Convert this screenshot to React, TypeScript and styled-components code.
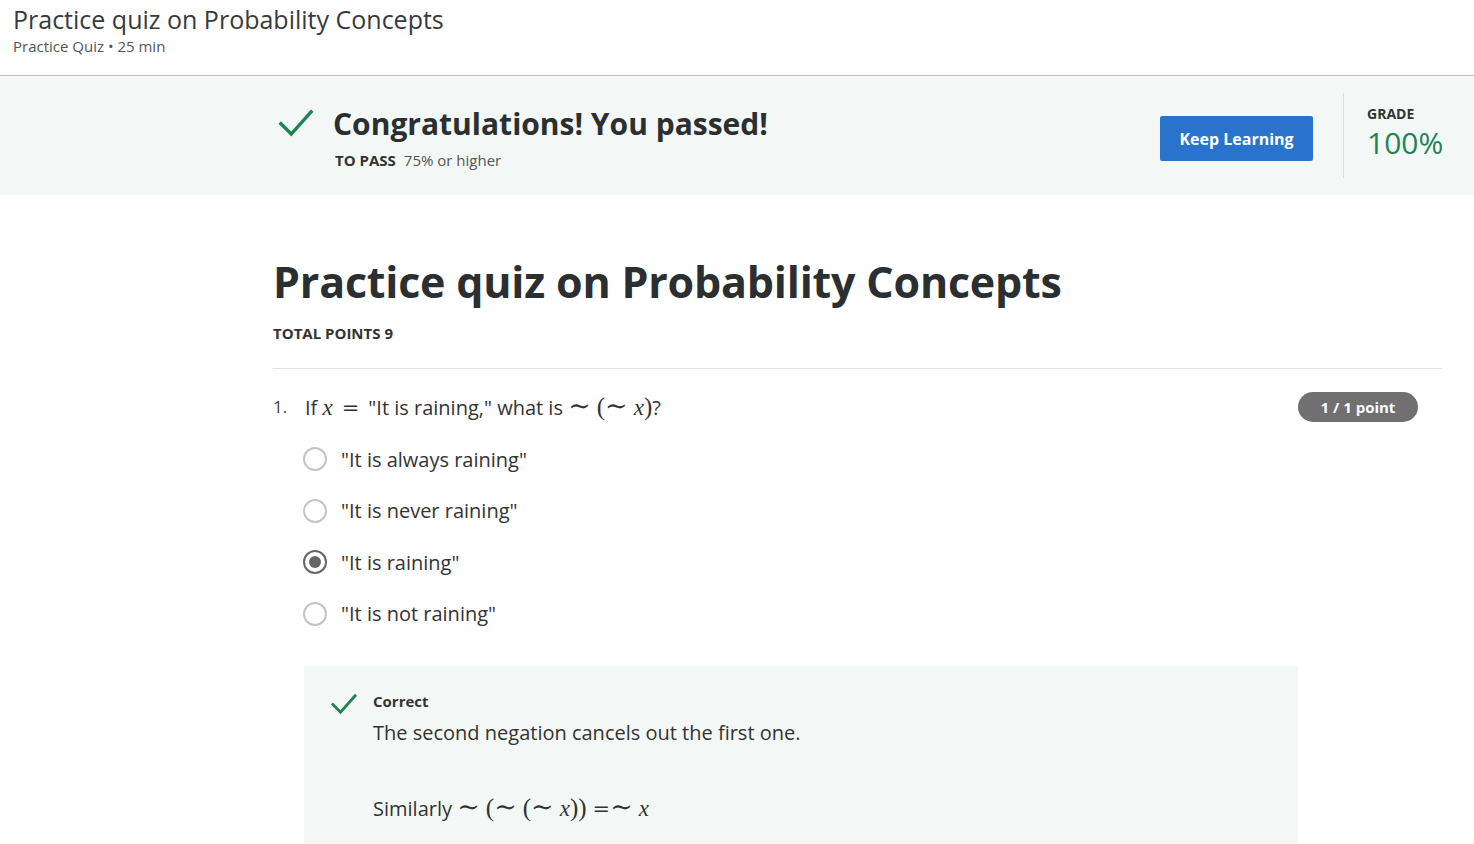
import React from "react";
import styled, { createGlobalStyle } from "styled-components";

const Global = createGlobalStyle`
  html, body { margin: 0; padding: 0; background: #fff; }
  body { font-family: "Open Sans", "Noto Sans", Arial, sans-serif; color: #333; -webkit-font-smoothing: antialiased; }
  * { box-sizing: border-box; }
`;

const Page = styled.div`
  width: 1474px;
  height: 844px;
  overflow: hidden;
`;

const Header = styled.header`
  height: 76px;
  padding: 4px 13px 0;
  border-bottom: 1px solid #bdbdbd;
`;

const HeaderTitle = styled.h1`
  margin: 0;
  font-size: 25px;
  font-weight: 400;
  line-height: 30px;
  color: #373a3c;
`;

const HeaderSub = styled.div`
  margin-top: 2px;
  font-size: 15px;
  line-height: 20px;
  color: #555;
`;

const Band = styled.section`
  height: 119px;
  background: #f3f8f6;
  display: flex;
  align-items: center;
  padding-left: 277px;
`;

const PassBlock = styled.div`
  display: flex;
  align-items: flex-start;
  flex: 1;
`;

const CheckWrap = styled.div<{ $size: number; $top?: number }>`
  width: ${(p) => p.$size}px;
  height: ${(p) => p.$size}px;
  margin-top: ${(p) => p.$top ?? 0}px;
  flex: none;
  display: flex;
`;

const PassText = styled.div`
  margin-left: 18px;
  padding-top: 4px;
`;

const PassTitle = styled.h2`
  margin: 0;
  font-size: 30px;
  font-weight: 700;
  line-height: 38px;
  color: #2b2f31;
`;

const PassMeta = styled.div`
  margin-top: 7px;
  font-size: 15px;
  line-height: 20px;
  color: #555;
  padding-left: 2px;
`;

const Strong = styled.span`
  font-weight: 700;
  color: #333;
  margin-right: 8px;
`;

const KeepButton = styled.button`
  width: 153px;
  height: 45px;
  border: none;
  border-radius: 2px;
  background: #2a73cc;
  color: #fff;
  font-family: inherit;
  font-size: 16px;
  font-weight: 700;
  cursor: pointer;
  margin-right: 30px;
  margin-top: 6px;
`;

const GradeBox = styled.div`
  align-self: stretch;
  margin: 17px 0;
  border-left: 1px solid #dcdcdc;
  padding: 12px 0 0 23px;
  width: 131px;
`;

const GradeLabel = styled.div`
  font-size: 14px;
  font-weight: 700;
  line-height: 18px;
  color: #333;
`;

const GradeValue = styled.div`
  margin-top: 5px;
  font-size: 30px;
  line-height: 30px;
  color: #1f8354;
`;

const Main = styled.main`
  padding: 58px 32px 0 273px;
`;

const QuizTitle = styled.h1`
  margin: 0;
  font-size: 43px;
  font-weight: 700;
  line-height: 58px;
  color: #2b2f31;
  letter-spacing: -0.2px;
`;

const TotalPoints = styled.div`
  margin-top: 12px;
  font-size: 15px;
  font-weight: 700;
  line-height: 20px;
  color: #333;
`;

const Divider = styled.hr`
  margin: 25px 0 0;
  border: none;
  border-top: 1px solid #e3e3e3;
`;

const Question = styled.div`
  padding-top: 23px;
`;

const QuestionRow = styled.div`
  display: flex;
  align-items: flex-start;
`;

const QNum = styled.div`
  width: 32px;
  font-size: 17px;
  line-height: 30px;
  color: #444;
`;

const QText = styled.div`
  flex: 1;
  font-size: 20px;
  line-height: 30px;
  color: #333;
  white-space: nowrap;
`;

const Badge = styled.div`
  margin-right: 24px;
  height: 30px;
  width: 120px;
  border-radius: 15px;
  background: #707070;
  color: #fff;
  font-size: 15px;
  font-weight: 700;
  display: flex;
  align-items: center;
  justify-content: center;
`;

const MathGroup = styled.span`
  font-family: "DejaVu Serif", "Liberation Serif", serif;
  font-size: 22px;
  line-height: 1;
  white-space: nowrap;
`;

const MathOp = styled.span<{ $l?: number; $r?: number }>`
  font-family: "DejaVu Serif", "Liberation Serif", serif;
  font-size: 21px;
  margin-left: ${(p) => p.$l ?? 0}px;
  margin-right: ${(p) => p.$r ?? 0}px;
`;

const Tilde = styled.span<{ $l?: number; $r?: number }>`
  font-family: "DejaVu Serif", "Liberation Serif", serif;
  font-size: 27px;
  line-height: 1;
  margin-left: ${(p) => p.$l ?? 0}px;
  margin-right: ${(p) => p.$r ?? 0}px;
`;

const Paren = styled.span<{ $l?: number; $r?: number }>`
  font-family: "Liberation Serif", "DejaVu Serif", serif;
  font-size: 25px;
  margin-left: ${(p) => p.$l ?? 0}px;
  margin-right: ${(p) => p.$r ?? 0}px;
`;

const MathVar = styled.span<{ $l?: number; $r?: number }>`
  font-family: "Liberation Serif", "DejaVu Serif", serif;
  font-style: italic;
  font-size: 23px;
  margin-left: ${(p) => p.$l ?? 0}px;
  margin-right: ${(p) => p.$r ?? 0}px;
`;

const Options = styled.div`
  margin-top: 21px;
  padding-left: 30px;
  display: flex;
  flex-direction: column;
  gap: 21.5px;
`;

const Option = styled.label`
  display: flex;
  align-items: center;
  height: 30px;
  font-size: 20px;
  color: #333;
`;

const Radio = styled.span<{ $checked?: boolean }>`
  width: 24px;
  height: 24px;
  border-radius: 50%;
  border: 2px solid ${(p) => (p.$checked ? "#666" : "#c4c4c4")};
  display: flex;
  align-items: center;
  justify-content: center;
  margin-right: 14px;
  flex: none;
  &::after {
    content: "";
    display: ${(p) => (p.$checked ? "block" : "none")};
    width: 12px;
    height: 12px;
    border-radius: 50%;
    background: #666;
  }
`;

const Feedback = styled.div`
  margin: 37px 0 0 31px;
  width: 994px;
  height: 200px;
  background: #f3f8f6;
  padding: 24px 0 0 26px;
  display: flex;
`;

const FeedbackBody = styled.div`
  margin-left: 15px;
`;

const FeedbackTitle = styled.div`
  font-size: 15px;
  font-weight: 700;
  line-height: 22px;
  color: #333;
`;

const FeedbackText = styled.p`
  margin: 6px 0 0;
  font-size: 20px;
  line-height: 30px;
  color: #333;
  white-space: nowrap;
  & + & {
    margin-top: 45px;
  }
`;

const Check = ({ size, stroke }: { size: number; stroke: number }) => (
  <svg width={size} height={size} viewBox="0 0 24 24" fill="none">
    <path d="M2.5 12.5 L9 19 L21.5 5" stroke="#1f8354" strokeWidth={stroke} strokeLinecap="square" />
  </svg>
);

export default function App() {
  return (
    <Page>
      <Global />
      <Header>
        <HeaderTitle>Practice quiz on Probability Concepts</HeaderTitle>
        <HeaderSub>Practice Quiz • 25 min</HeaderSub>
      </Header>
      <Band>
        <PassBlock>
          <CheckWrap $size={38} $top={3}>
            <Check size={38} stroke={2.2} />
          </CheckWrap>
          <PassText>
            <PassTitle>Congratulations! You passed!</PassTitle>
            <PassMeta>
              <Strong>TO PASS</Strong>75% or higher
            </PassMeta>
          </PassText>
        </PassBlock>
        <KeepButton>Keep Learning</KeepButton>
        <GradeBox>
          <GradeLabel>GRADE</GradeLabel>
          <GradeValue>100%</GradeValue>
        </GradeBox>
      </Band>
      <Main>
        <QuizTitle>Practice quiz on Probability Concepts</QuizTitle>
        <TotalPoints>TOTAL POINTS 9</TotalPoints>
        <Divider />
        <Question>
          <QuestionRow>
            <QNum>1.</QNum>
            <QText>
              If{" "}
              <MathGroup>
                <MathVar>x</MathVar>
                <MathOp $l={9} $r={9}>=</MathOp>
              </MathGroup>
              "It is raining," what is{" "}
              <MathGroup>
                <Tilde $r={6}>∼</Tilde>
                <Paren>(</Paren>
                <Tilde $r={6}>∼</Tilde>
                <MathVar>x</MathVar>
                <Paren>)</Paren>
              </MathGroup>
              ?
            </QText>
            <Badge>1 / 1 point</Badge>
          </QuestionRow>
          <Options>
            <Option>
              <Radio />"It is always raining"
            </Option>
            <Option>
              <Radio />"It is never raining"
            </Option>
            <Option>
              <Radio $checked />"It is raining"
            </Option>
            <Option>
              <Radio />"It is not raining"
            </Option>
          </Options>
          <Feedback>
            <CheckWrap $size={28}>
              <Check size={28} stroke={2.4} />
            </CheckWrap>
            <FeedbackBody>
              <FeedbackTitle>Correct</FeedbackTitle>
              <FeedbackText>The second negation cancels out the first one.</FeedbackText>
              <FeedbackText>
                Similarly{" "}
                <MathGroup>
                  <Tilde $r={6}>∼</Tilde>
                  <Paren>(</Paren>
                  <Tilde $r={6}>∼</Tilde>
                  <Paren>(</Paren>
                  <Tilde $r={6}>∼</Tilde>
                  <MathVar>x</MathVar>
                  <Paren>))</Paren>
                  <MathOp $l={6}>=</MathOp>
                  <Tilde $r={6}>∼</Tilde>
                  <MathVar>x</MathVar>
                </MathGroup>
              </FeedbackText>
            </FeedbackBody>
          </Feedback>
        </Question>
      </Main>
    </Page>
  );
}
